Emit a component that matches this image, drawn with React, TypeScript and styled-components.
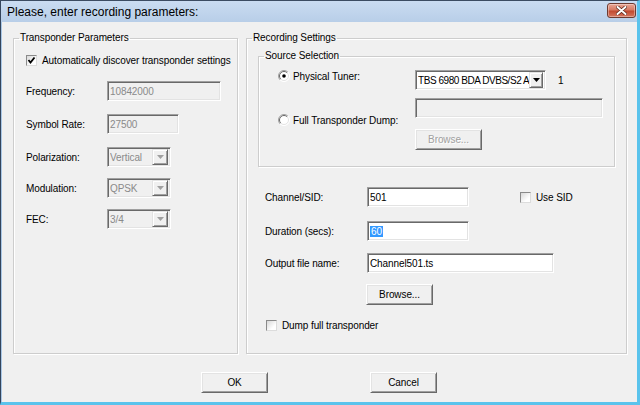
import styled, { createGlobalStyle } from "styled-components";

const GlobalStyle = createGlobalStyle`
  html, body {
    margin: 0;
    padding: 0;
    background: #ffffff;
  }
  body {
    font-family: "Liberation Sans", Arial, sans-serif;
    font-size: 10px;
    letter-spacing: -0.1px;
    color: #000;
  }
  * {
    box-sizing: border-box;
  }
`;

const Window = styled.div`
  width: 640px;
  height: 405px;
  display: flex;
  flex-direction: column;
  background: #f0f0f0;
  border-top: 1px solid #3c4c62;
  border-left: 1px solid #34455c;
  border-right: 3px solid #5ac3ec;
  border-bottom: 3px solid #5ac3ec;
  box-shadow: inset 1px 0 0 #a9c7e6;
`;

const TitleBar = styled.div`
  height: 21px;
  flex: none;
  display: flex;
  align-items: center;
  justify-content: space-between;
  padding-left: 6px;
  background: linear-gradient(#cadcf1, #b8cee8);
  font-size: 12px;
  letter-spacing: 0;
`;

const CloseButton = styled.div`
  width: 29px;
  height: 15px;
  margin-right: 1px;
  align-self: flex-start;
  margin-top: 2px;
  display: flex;
  align-items: center;
  justify-content: center;
  border: 1px solid #6e3b30;
  border-radius: 3px;
  background: linear-gradient(#e9a796, #d67a63 45%, #c24a30 55%, #d4765f);
  box-shadow: inset 0 0 0 1px rgba(255, 255, 255, 0.35);
`;

const Content = styled.div`
  flex: 1;
  display: flex;
  gap: 8px;
  padding: 10px 10px 0 12px;
`;

const Group = styled.fieldset<{ $w?: number }>`
  margin: 0;
  padding: 0;
  min-width: 0;
  ${(p) => (p.$w ? `width: ${p.$w}px; flex: none;` : "flex: 1;")}
  border: 1px solid #cdcdcd;
  box-shadow: inset 1px 1px 0 #fff, 1px 1px 0 #fff;
`;

const Legend = styled.legend`
  margin-left: 5px;
  padding: 0 1px;
  line-height: 12px;
  font-size: 10px;
`;

const Stack = styled.div<{ $pl: number; $pr?: number; $pb?: number }>`
  display: flex;
  flex-direction: column;
  padding: 0 ${(p) => p.$pr ?? 0}px ${(p) => p.$pb ?? 0}px ${(p) => p.$pl}px;
`;

const Row = styled.div<{ $top: number; $h?: number }>`
  display: flex;
  align-items: center;
  margin-top: ${(p) => p.$top}px;
  height: ${(p) => p.$h ?? 20}px;
`;

const Label = styled.span<{ $w: number }>`
  width: ${(p) => p.$w}px;
  flex: none;
  white-space: nowrap;
`;

const Edit = styled.div<{ $w: number; $off?: boolean }>`
  width: ${(p) => p.$w}px;
  height: 20px;
  flex: none;
  display: flex;
  align-items: center;
  padding-left: 2px;
  white-space: nowrap;
  background: ${(p) => (p.$off ? "#f0f0f0" : "#ffffff")};
  color: ${(p) => (p.$off ? "#8a8a8a" : "#000")};
  border: 1px solid;
  border-color: #a0a0a0 #ffffff #ffffff #a0a0a0;
  box-shadow: inset 1px 1px 0 #696969, inset -1px -1px 0 #e3e3e3;
`;

const Selected = styled.span`
  background: #3399ff;
  color: #fff;
  padding: 0 1px;
`;

const Combo = styled(Edit)`
  padding-right: 2px;
  justify-content: space-between;
`;

const ComboText = styled.span<{ $tight?: boolean }>`
  overflow: hidden;
  flex: 1;
  letter-spacing: ${(p) => (p.$tight ? "-0.45px" : "-0.1px")};
`;

const DropButton = styled.div<{ $off?: boolean }>`
  width: ${(p) => (p.$off ? 16 : 14)}px;
  height: 16px;
  flex: none;
  display: flex;
  align-items: center;
  justify-content: center;
  background: #f0f0f0;
  border: 1px solid;
  border-color: #e3e3e3 #696969 #696969 #e3e3e3;
  box-shadow: inset 1px 1px 0 #fff, inset -1px -1px 0 #a0a0a0;
`;

const Button = styled.div<{ $w?: number; $off?: boolean }>`
  width: ${(p) => p.$w ?? 67}px;
  height: 21px;
  flex: none;
  display: flex;
  align-items: center;
  justify-content: center;
  background: #f0f0f0;
  color: ${(p) => (p.$off ? "#a0a0a0" : "#000")};
  text-shadow: ${(p) => (p.$off ? "1px 1px 0 #fff" : "none")};
  border: 1px solid;
  border-color: #ffffff #696969 #696969 #ffffff;
  box-shadow: inset 1px 1px 0 #e3e3e3, inset -1px -1px 0 #a0a0a0;
`;

const CheckLine = styled.label<{ $ml?: number }>`
  display: flex;
  align-items: center;
  gap: 5px;
  margin-left: ${(p) => p.$ml ?? 0}px;
  white-space: nowrap;
`;

const Box = styled.span`
  width: 11px;
  height: 11px;
  flex: none;
  display: flex;
  align-items: center;
  justify-content: center;
  background: linear-gradient(135deg, #d8d8d8, #ffffff 70%);
  border: 1px solid;
  border-color: #8a8a8a #dcdcdc #dcdcdc #8a8a8a;
`;

const Source = styled(Group)`
  margin-top: 6px;
  flex: none;
`;

const SourceGrid = styled.div`
  display: grid;
  grid-template-columns: 137px auto;
  padding: 0 0 16px 19px;
`;

const RadioLine = styled.label<{ $span?: boolean }>`
  display: flex;
  align-items: center;
  gap: 3px;
  white-space: nowrap;
  grid-column: 1;
  ${(p) => (p.$span ? "grid-row: 2 / span 2;" : "")}
`;

const Cell = styled.div<{ $top: number; $row: number }>`
  grid-column: 2;
  grid-row: ${(p) => p.$row};
  margin-top: ${(p) => p.$top}px;
  display: flex;
  align-items: center;
  gap: 12px;
`;

const Footer = styled.div`
  height: 48px;
  flex: none;
  display: flex;
  justify-content: center;
  gap: 102px;
  padding-top: 18px;
`;

function Check({ on }: { on?: boolean }) {
  return (
    <Box>
      {on && (
        <svg width="9" height="9" viewBox="0 0 9 9">
          <path d="M1.5 4 L3.5 6.5 L7.5 1.5" stroke="#000" strokeWidth="1.8" fill="none" />
        </svg>
      )}
    </Box>
  );
}

function Radio({ on }: { on?: boolean }) {
  return (
    <svg width="12" height="12" viewBox="0 0 12 12">
      <circle cx="6" cy="6" r="5.5" fill="#fff" />
      <path d="M2.1 9.9 A5.5 5.5 0 0 1 9.9 2.1" stroke="#a0a0a0" fill="none" />
      <path d="M2.8 9.2 A4.5 4.5 0 0 1 9.2 2.8" stroke="#696969" fill="none" />
      <path d="M9.9 2.1 A5.5 5.5 0 0 1 2.1 9.9" stroke="#fff" fill="none" />
      <path d="M9.2 2.8 A4.5 4.5 0 0 1 2.8 9.2" stroke="#e3e3e3" fill="none" />
      {on && <circle cx="6" cy="6" r="1.8" fill="#000" />}
    </svg>
  );
}

function Arrow({ off }: { off?: boolean }) {
  return (
    <svg width="7" height="4" viewBox="0 0 7 4">
      <path d="M0 0 H7 L3.5 4 Z" fill={off ? "#a0a0a0" : "#000"} />
    </svg>
  );
}

function DropDown({ w, text, off, tight }: { w: number; text: string; off?: boolean; tight?: boolean }) {
  return (
    <Combo $w={w} $off={off}>
      <ComboText $tight={tight}>{text}</ComboText>
      <DropButton $off={off}>
        <Arrow off={off} />
      </DropButton>
    </Combo>
  );
}

export default function App() {
  return (
    <>
      <GlobalStyle />
      <Window>
        <TitleBar>
          <span>Please, enter recording parameters:</span>
          <CloseButton>
            <svg width="11" height="9" viewBox="0 0 11 9">
              <path d="M1.5 1 L9.5 8 M9.5 1 L1.5 8" stroke="#5a2418" strokeWidth="3.4" strokeLinecap="round" />
              <path d="M1.5 1 L9.5 8 M9.5 1 L1.5 8" stroke="#fff" strokeWidth="2" strokeLinecap="round" />
            </svg>
          </CloseButton>
        </TitleBar>

        <Content>
          <Group $w={225}>
            <Legend>Transponder Parameters</Legend>
            <Stack $pl={12}>
              <Row $top={10} $h={13}>
                <CheckLine>
                  <Check on />
                  Automatically discover transponder settings
                </CheckLine>
              </Row>
              <Row $top={14}>
                <Label $w={81}>Frequency:</Label>
                <Edit $w={114} $off>10842000</Edit>
              </Row>
              <Row $top={13}>
                <Label $w={81}>Symbol Rate:</Label>
                <Edit $w={72} $off>27500</Edit>
              </Row>
              <Row $top={13}>
                <Label $w={81}>Polarization:</Label>
                <DropDown w={64} text="Vertical" off />
              </Row>
              <Row $top={11}>
                <Label $w={81}>Modulation:</Label>
                <DropDown w={64} text="QPSK" off />
              </Row>
              <Row $top={11}>
                <Label $w={81}>FEC:</Label>
                <DropDown w={64} text="3/4" off />
              </Row>
            </Stack>
          </Group>

          <Group>
            <Legend>Recording Settings</Legend>
            <Stack $pl={11} $pr={11}>
              <Source>
                <Legend>Source Selection</Legend>
                <SourceGrid>
                  <RadioLine>
                    <Radio on />
                    Physical Tuner:
                  </RadioLine>
                  <Cell $row={1} $top={8}>
                    <DropDown w={131} text="TBS 6980 BDA DVBS/S2 A" tight />
                    <span>1</span>
                  </Cell>
                  <RadioLine $span>
                    <Radio />
                    Full Transponder Dump:
                  </RadioLine>
                  <Cell $row={2} $top={8}>
                    <Edit $w={188} $off />
                  </Cell>
                  <Cell $row={3} $top={11}>
                    <Button $off>Browse...</Button>
                  </Cell>
                </SourceGrid>
              </Source>

              <Stack $pl={7}>
                <Row $top={20}>
                  <Label $w={102}>Channel/SID:</Label>
                  <Edit $w={102}>501</Edit>
                  <CheckLine $ml={51}>
                    <Check />
                    Use SID
                  </CheckLine>
                </Row>
                <Row $top={14}>
                  <Label $w={102}>Duration (secs):</Label>
                  <Edit $w={102}>
                    <Selected>60</Selected>
                  </Edit>
                </Row>
                <Row $top={12}>
                  <Label $w={102}>Output file name:</Label>
                  <Edit $w={187}>Channel501.ts</Edit>
                </Row>
                <Row $top={11} $h={21}>
                  <Label $w={101} />
                  <Button>Browse...</Button>
                </Row>
                <Row $top={14} $h={13}>
                  <CheckLine $ml={1}>
                    <Check />
                    Dump full transponder
                  </CheckLine>
                </Row>
              </Stack>
            </Stack>
          </Group>
        </Content>

        <Footer>
          <Button>OK</Button>
          <Button>Cancel</Button>
        </Footer>
      </Window>
    </>
  );
}
